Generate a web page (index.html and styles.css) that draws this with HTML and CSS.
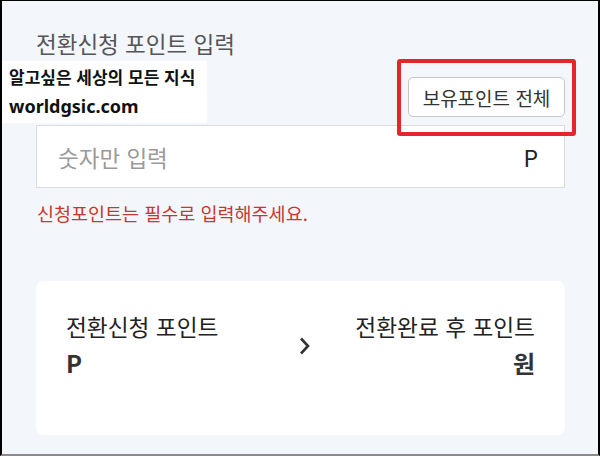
FILE: index.html
```html
<!DOCTYPE html>
<html lang="ko">
<head>
<meta charset="utf-8">
<link rel="stylesheet" href="styles.css">
</head>
<body>
<div class="page">
  <h2 class="title">전환신청 포인트 입력</h2>
  <div class="btn-row">
    <button class="all-btn" type="button">보유포인트 전체</button>
  </div>
  <div class="input-box">
    <span class="placeholder">숫자만 입력</span>
    <span class="unit">P</span>
  </div>
  <p class="error">신청포인트는 필수로 입력해주세요.</p>
  <div class="card">
    <div class="col">
      <div class="label">전환신청 포인트</div>
      <div class="value">P</div>
    </div>
    <svg class="chev" width="14" height="18" viewBox="0 0 14 18"><path d="M5 1.5 L12 9 L5 16.5" fill="none" stroke="#333" stroke-width="2.6"/></svg>
    <div class="col right">
      <div class="label">전환완료 후 포인트</div>
      <div class="value">원</div>
    </div>
  </div>
  <div class="watermark">
    <div class="wm1">알고싶은 세상의 모든 지식</div>
    <div class="wm2">worldgsic.com</div>
  </div>
  <div class="highlight"></div>
</div>
</body>
</html>
```
FILE: styles.css
```css
* { box-sizing: border-box; }
html, body { margin: 0; padding: 0; }
body {
  font-family: "Noto Sans CJK KR", "Noto Sans", sans-serif;
  background: #f3f6fb;
}
.page {
  position: relative;
  width: 600px;
  height: 456px;
  border-top: 1px solid #000;
  border-left: 2px solid #000;
  border-right: 2px solid #000;
  border-bottom: 2px solid #8a8a8a;
  padding: 27px 33px 0 34px;
  overflow: hidden;
}
.title {
  margin: 0;
  font-size: 22.5px;
  line-height: 30px;
  font-weight: 400;
  color: #555;
}
.btn-row {
  display: flex;
  justify-content: flex-end;
  margin-top: 19px;
}
.all-btn {
  width: 157px;
  height: 40px;
  background: #fff;
  border: 1px solid #c6c6c6;
  border-radius: 5px;
  font-family: inherit;
  font-size: 19px;
  color: #333;
  padding: 0;
}
.input-box {
  margin-top: 8px;
  height: 63px;
  background: #fff;
  border: 1px solid #dcdcdc;
  display: flex;
  align-items: center;
  justify-content: space-between;
  padding: 0 26px 0 21px;
}
.placeholder {
  font-size: 22.5px;
  color: #9a9a9a;
}
.unit {
  font-size: 23px;
  color: #222;
}
.error {
  margin: 13px 0 0 1px;
  font-size: 18.5px;
  line-height: 24px;
  color: #c8372d;
}
.card {
  margin-top: 56px;
  height: 154px;
  background: #fff;
  border-radius: 8px;
  padding: 31px 30px 0 30px;
  display: grid;
  grid-template-columns: 1fr auto 1fr;
  align-items: start;
}
.col.right { text-align: right; }
.label {
  font-size: 22.7px;
  line-height: 30px;
  color: #222;
}
.value {
  margin-top: 5px;
  font-size: 24px;
  line-height: 32px;
  font-weight: 700;
  color: #333;
}
.chev {
  margin-top: 25px;
  margin-left: 4px;
}
.watermark {
  position: absolute;
  left: -2px;
  top: 60px;
  width: 207px;
  height: 62px;
  background: #fff;
  padding: 4px 0 0 9px;
  color: #111;
  font-weight: 700;
}
.wm1 {
  font-size: 17px;
  line-height: 24px;
}
.wm2 {
  margin-top: 4px;
  font-size: 18px;
  line-height: 26px;
  font-family: "Noto Sans", sans-serif;
}
.highlight {
  position: absolute;
  left: 395px;
  top: 58px;
  width: 179px;
  height: 77px;
  border: 4px solid #e3262d;
  border-radius: 3px;
}
```
